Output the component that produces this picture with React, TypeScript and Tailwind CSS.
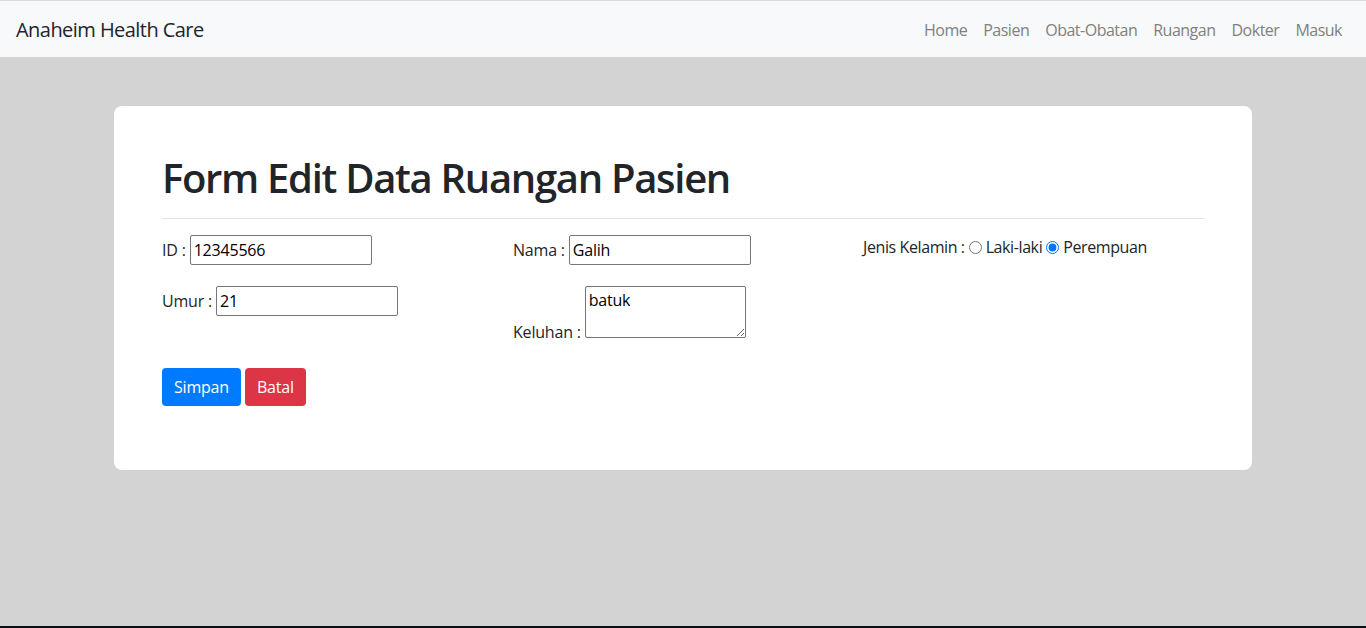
// App.tsx: form edit data ruangan pasien, Bootstrap-like layout.
const navLinks = ["Home", "Pasien", "Obat-Obatan", "Ruangan", "Dokter", "Masuk"];

const font = { fontFamily: '"Open Sans", "Noto Sans", Arial, sans-serif' };

export default function App() {
  return (
    <div
      className="flex min-h-screen flex-col bg-[#d3d3d3] text-[16px] leading-6 tracking-[-0.2px] text-[#212529]"
      style={font}
    >
      <nav className="flex h-[57px] items-center justify-between border-t border-[#dcdcdc] bg-[#f8f9fa] px-4 pt-px">
        <span className="text-[20px] tracking-[-0.55px] text-[#212529]">Anaheim Health Care</span>
        <ul className="flex">
          {navLinks.map((link) => (
            <li key={link} className="px-2 tracking-[-0.5px] text-[#808080]">
              {link}
            </li>
          ))}
        </ul>
      </nav>

      <main className="flex-1 px-[114px] pt-[49px]">
        <div className="rounded-lg bg-white px-12 pb-16 pt-12">
          <h1 className="text-[40px] font-semibold leading-[48px] tracking-[-1.3px]">
            Form Edit Data Ruangan Pasien
          </h1>
          <hr className="mb-4 mt-4 border-t border-[#e5e5e5]" />

          <div className="grid grid-cols-[351px_350px_1fr]">
            <div className="flex flex-col gap-[21px]">
              <label className="flex items-center gap-1">
                ID :
                <input
                  readOnly
                  value="12345566"
                  className="h-[30px] w-[182px] rounded-[2px] border border-[#767676] px-[3px] text-black"
                />
              </label>
              <label className="flex items-center gap-1">
                Umur :
                <input
                  readOnly
                  value="21"
                  className="h-[30px] w-[182px] rounded-[2px] border border-[#767676] px-[3px] text-black"
                />
              </label>
            </div>

            <div className="flex flex-col gap-[21px]">
              <label className="flex items-center gap-1">
                Nama :
                <input
                  readOnly
                  value="Galih"
                  className="h-[30px] w-[182px] rounded-[2px] border border-[#767676] px-[3px] text-black"
                />
              </label>
              <label className="flex items-end gap-1">
                <span className="leading-[12px]">Keluhan :</span>
                <textarea
                  readOnly
                  value="batuk"
                  className="h-[52px] w-[161px] resize rounded-[2px] border border-[#767676] px-[3px] pb-0 pt-[2px] leading-[22px] text-black"
                />
              </label>
            </div>

            <div className="flex items-center gap-1 self-start tracking-[-0.4px]">
              <span>Jenis Kelamin :</span>
              <label className="flex items-center gap-1">
                <input type="radio" name="jk" className="m-0 h-[13px] w-[13px]" />
                Laki-laki
              </label>
              <label className="flex items-center gap-1">
                <input type="radio" name="jk" defaultChecked className="m-0 h-[13px] w-[13px]" />
                Perempuan
              </label>
            </div>
          </div>

          <div className="mt-[30px] flex gap-1">
            <button className="h-[38px] rounded bg-[#007bff] px-3 text-white">Simpan</button>
            <button className="h-[38px] rounded bg-[#dc3545] px-3 text-white">Batal</button>
          </div>
        </div>
      </main>

      <div className="h-[2px] bg-[#0b0f17]" />
    </div>
  );
}
